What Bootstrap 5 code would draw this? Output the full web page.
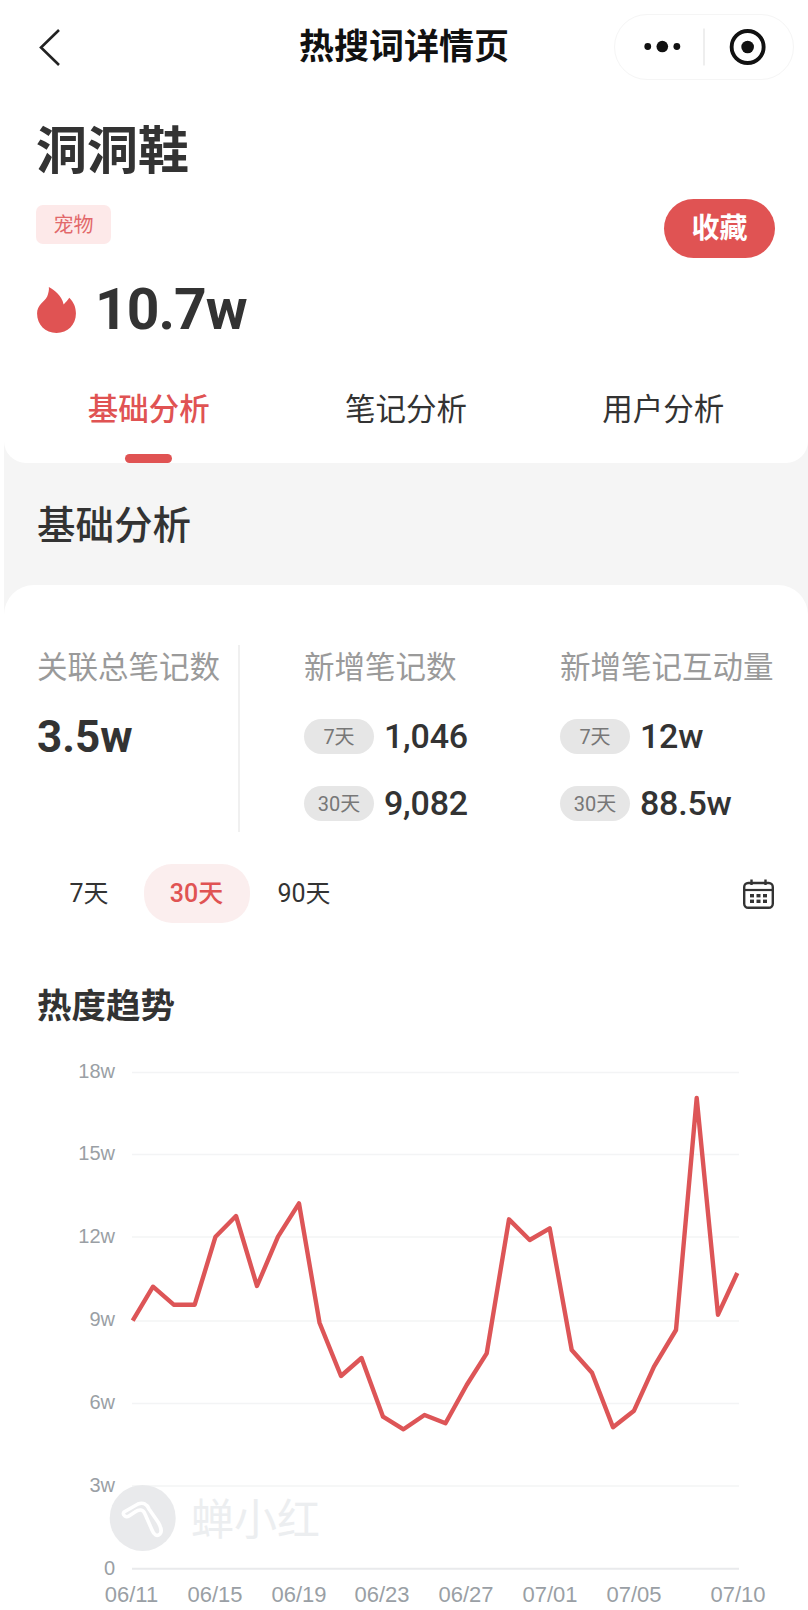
<!DOCTYPE html>
<html lang="zh">
<head>
<meta charset="utf-8">
<title>热搜词详情页</title>
<link rel="stylesheet" href="https://cdn.jsdelivr.net/npm/bootstrap@5.3.0/dist/css/bootstrap.min.css">
<style>
html,body{height:1610px;overflow:hidden;background:#fff}
body{font-family:"Roboto","Noto Sans CJK SC",sans-serif;color:#333}
.topbar{display:grid;grid-template-columns:1fr auto 1fr;padding:14px 14px 0;height:80px}
.back{margin:15px 0 0 25px}
.page-title{font-size:35px;font-weight:700;line-height:68px;color:#111;margin:0}
.capsule{width:180px;height:66px;border:1px solid #f5f5f5;border-radius:33px;justify-self:end}
.shell{background:#f5f5f5;margin-left:4px}
.head-sheet{background:#fff;border-radius:0 0 22px 22px;padding:42px 33px 0 32px;height:383px}
.word{font-size:51px;font-weight:700;line-height:60px;margin:0;color:#333}
.tag-row{margin-top:17px;height:59px}
.tag-pill{margin-top:6px;height:39px;width:75px;background:#fde9e9;color:#e2686a;font-size:20px;border-radius:7px}
.fav{width:111px;height:59px;background:#e05353;color:#fff;font-size:28px;font-weight:700;border-radius:30px;padding:0;border:0}
.fav:hover{background:#e05353;color:#fff}
.heat-row{margin-top:28px;height:48px;gap:19px;padding-left:1px}
.heat{font-size:57px;font-weight:700;line-height:48px;letter-spacing:-1px;color:#333}
.tabs{margin:46px -17px 0 -16px;height:83px}
.tab-cell{font-size:30.5px;line-height:60px;color:#333}
.tab-on{color:#e05353;font-weight:500}
.tab-bar{width:47px;height:9px;border-radius:5px;background:#e05353;margin-top:14px}
.sec-head{font-size:38.5px;font-weight:500;line-height:50px;margin:0;padding:38px 33px 34px;color:#333}
.sheet{background:#fff;border-radius:30px 30px 0 0;padding-top:60px;height:1025px}
.stat-row{height:187px}
.stat-a{width:236px;padding-left:33px;border-right:2px solid #f0f0f0}
.stat-b{width:256px;margin-left:64px}
.stat-label{font-size:30.5px;line-height:46px;color:#9a9a9a;white-space:nowrap}
.stat-big{font-size:44px;font-weight:700;line-height:50px;margin-top:21px;color:#333}
.stat-line{height:35px;gap:10px;margin-top:32px}
.stat-line.first{margin-top:28px}
.day-pill{width:70px;height:35px;border-radius:18px;background:#e6e6e6;color:#777;font-size:20px}
.stat-num{font-size:34px;font-weight:500;line-height:35px;letter-spacing:-.2px;color:#333}
.range{margin-top:32px;padding:0 34px 0 32px;height:59px}
.range-item{width:106px;height:59px;font-size:25px;color:#333;border-radius:28px;margin-right:1.5px}
.range-on{background:#fbeeee;color:#e05353;font-weight:500}
.trend{font-size:34.5px;font-weight:700;line-height:46px;margin:60px 0 0 33px;color:#333}
.chart{display:block;margin-top:11px}
.ax{font-family:"Liberation Sans","Noto Sans CJK SC",sans-serif;font-size:20px;fill:#9a9fa5}
.ax-x{font-size:22px}
.wm{font-family:"Noto Sans CJK SC",sans-serif;font-size:43px;fill:#eceef0;font-weight:400}
</style>
</head>
<body>
<div class="topbar">
  <svg class="back" width="22" height="38" viewBox="0 0 22 38"><polyline points="20,1 2,18.5 20,36" fill="none" stroke="#222" stroke-width="2.6"/></svg>
  <h1 class="page-title">热搜词详情页</h1>
  <svg class="capsule" viewBox="0 0 180 66">
    <circle cx="32" cy="32.5" r="3.5" fill="#111"/><circle cx="47" cy="32.5" r="6" fill="#111"/><circle cx="62" cy="32.5" r="3.5" fill="#111"/>
    <line x1="90" y1="14" x2="90" y2="52" stroke="#e8e8e8" stroke-width="1.5"/>
    <circle cx="135" cy="33" r="16.5" fill="none" stroke="#111" stroke-width="4"/><circle cx="135" cy="33" r="6.5" fill="#111"/>
  </svg>
</div>
<div class="shell">
  <section class="head-sheet">
    <h2 class="word">洞洞鞋</h2>
    <div class="tag-row d-flex justify-content-between align-items-start">
      <span class="tag-pill d-flex align-items-center justify-content-center">宠物</span>
      <button type="button" class="btn fav">收藏</button>
    </div>
    <div class="heat-row d-flex align-items-center">
      <svg width="39" height="46" viewBox="0 0 38 45"><path d="M11.5 0C17 3 24 8 26 17C28 15 30 13 31.5 10.5C36 15 38 20 38 26C38 37 30 45 19 45C8 45 0 37 0 26C0 17 7 15 10 9C11 6 12 3 11.5 0Z" fill="#e05353"/></svg>
      <span class="heat">10.7w</span>
    </div>
    <div class="tabs row g-0">
      <div class="col-4 tab-cell tab-on d-flex flex-column align-items-center">基础分析<span class="tab-bar"></span></div>
      <div class="col-4 tab-cell text-center">笔记分析</div>
      <div class="col-4 tab-cell text-center">用户分析</div>
    </div>
  </section>
  <h3 class="sec-head">基础分析</h3>
  <section class="sheet">
    <div class="stat-row d-flex">
      <div class="stat-a">
        <div class="stat-label">关联总笔记数</div>
        <div class="stat-big">3.5w</div>
      </div>
      <div class="stat-b">
        <div class="stat-label">新增笔记数</div>
        <div class="stat-line first d-flex align-items-center"><span class="day-pill d-flex align-items-center justify-content-center">7天</span><span class="stat-num">1,046</span></div>
        <div class="stat-line d-flex align-items-center"><span class="day-pill d-flex align-items-center justify-content-center">30天</span><span class="stat-num">9,082</span></div>
      </div>
      <div>
        <div class="stat-label">新增笔记互动量</div>
        <div class="stat-line first d-flex align-items-center"><span class="day-pill d-flex align-items-center justify-content-center">7天</span><span class="stat-num">12w</span></div>
        <div class="stat-line d-flex align-items-center"><span class="day-pill d-flex align-items-center justify-content-center">30天</span><span class="stat-num">88.5w</span></div>
      </div>
    </div>
    <div class="range d-flex align-items-center">
      <span class="range-item d-flex align-items-center justify-content-center">7天</span>
      <span class="range-item range-on d-flex align-items-center justify-content-center">30天</span>
      <span class="range-item d-flex align-items-center justify-content-center">90天</span>
      <svg class="ms-auto" width="31" height="30" viewBox="0 0 31 30" fill="none" stroke="#333">
        <rect x="1.2" y="4" width="28.6" height="24.8" rx="4" stroke-width="2.4"/>
        <line x1="1.5" y1="11" x2="29.5" y2="11" stroke-width="2.2"/>
        <line x1="8.5" y1="0.5" x2="8.5" y2="6" stroke-width="2.4"/><line x1="22.5" y1="0.5" x2="22.5" y2="6" stroke-width="2.4"/>
        <g fill="#333" stroke="none"><rect x="7" y="15" width="4" height="3.4"/><rect x="13.5" y="15" width="4" height="3.4"/><rect x="20" y="15" width="4" height="3.4"/><rect x="7" y="20.6" width="4" height="3.4"/><rect x="13.5" y="20.6" width="4" height="3.4"/><rect x="20" y="20.6" width="4" height="3.4"/></g>
      </svg>
    </div>
    <div class="trend">热度趋势</div>
    <svg class="chart" width="804" height="570" viewBox="4 1040 804 570">
      <g stroke="#f3f4f5" stroke-width="1.5">
        <line x1="132" y1="1072.5" x2="739" y2="1072.5"/><line x1="132" y1="1154.5" x2="739" y2="1154.5"/><line x1="132" y1="1237" x2="739" y2="1237"/><line x1="132" y1="1321" x2="739" y2="1321"/><line x1="132" y1="1403.5" x2="739" y2="1403.5"/><line x1="132" y1="1486" x2="739" y2="1486"/>
      </g>
      <line x1="132" y1="1568.7" x2="739" y2="1568.7" stroke="#e9eaec" stroke-width="2"/>
      <g class="ax" text-anchor="end">
        <text x="115" y="1078">18w</text><text x="115" y="1160">15w</text><text x="115" y="1243">12w</text><text x="115" y="1326">9w</text><text x="115" y="1409">6w</text><text x="115" y="1492">3w</text><text x="115" y="1575">0</text>
      </g>
      <g class="ax ax-x" text-anchor="middle">
        <text x="131.5" y="1602">06/11</text><text x="215" y="1602">06/15</text><text x="299" y="1602">06/19</text><text x="382" y="1602">06/23</text><text x="466" y="1602">06/27</text><text x="550" y="1602">07/01</text><text x="634" y="1602">07/05</text><text x="738" y="1602">07/10</text>
      </g>
      <circle cx="142.7" cy="1518" r="33" fill="#e9eaec"/>
      <path d="M124 1512L138 1504C143 1502 147 1504 149 1509L158 1522C161 1527 162 1532 160 1534C157 1537 154 1535 152 1530L145 1514C143 1509 139 1509 135 1512L129 1516C126 1518 122 1515 124 1512Z" fill="none" stroke="#fff" stroke-width="3.6" stroke-linejoin="round"/>
      <text class="wm" x="191" y="1535">蝉小红</text>
      <polyline fill="none" stroke="#dd5557" stroke-width="4.4" stroke-linejoin="round" points="132.7,1320.7 153,1286.7 173.7,1304.7 194.7,1304.7 215.5,1236.7 236,1216 257,1286 278,1236.7 299,1203.3 319.5,1322.7 341,1376 361.5,1358 383,1416.7 403.5,1429.3 424.5,1415 445.5,1423.3 466.7,1385 486.7,1353.3 509,1219.3 529.7,1240 549.7,1228.3 571.7,1350 592,1372.7 613,1427.3 634,1410.7 654,1366.7 676,1330 696.7,1098 718,1314.7 737.3,1273"/>
    </svg>
  </section>
</div>
<script src="https://cdn.jsdelivr.net/npm/bootstrap@5.3.0/dist/js/bootstrap.bundle.min.js"></script>
</body>
</html>
